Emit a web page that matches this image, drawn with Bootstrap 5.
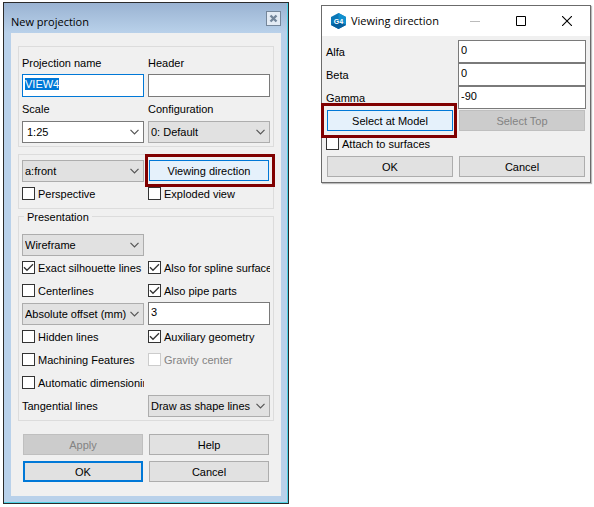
<!DOCTYPE html>
<html lang="en">
<head>
<meta charset="utf-8">
<meta name="viewport" content="width=device-width, initial-scale=1">
<title>New projection</title>
<link href="https://cdn.jsdelivr.net/npm/bootstrap@5.3.0/dist/css/bootstrap.min.css" rel="stylesheet">
<style>
body { font-family: "Liberation Sans", Arial, sans-serif; font-size: 11px; line-height: 15px; color: #000; background: #fff; }
.desktop { display: grid; grid-template-columns: 286fr 270fr; gap: 32px; padding: 2px 3px; align-items: start; }
.win-title { font-family: "Open Sans", "Noto Sans", sans-serif; font-size: 11px; line-height: 16px; font-weight: 400; color: #000; }
.win-old { border: 1px solid #2b2b2b; box-shadow: inset -1px -1px 0 #4fd3e6; background: linear-gradient(#9ab3d2, #b9d1ea 30px); padding: 0 7px 7px; }
.win-old header { height: 30px; }
.win-old .win-title { padding-top: 8px; }
.client { background: #f0f0f0; }
.client label { padding-top: 2px; }
.win-old .client { padding: 13px 7px 14px 7px; }
.win-new { border: 1px solid #6b6b6b; margin-top: 3px; box-shadow: 1px 1px 1px #bbb; }
.win-new header { height: 30px; background: #fff; padding-left: 9px; }
.win-new .win-title { padding-left: 5px; }
.win-new .client { padding: 4px 4px 5px; }
.close-old { width: 15px; height: 15px; border: 1px solid #74869a; background: #e3ebf4; }
.close-old, .cap-btn { padding: 0; line-height: 0; border-radius: 0; }
.cap-btn { width: 46px; border: 0; background: none; display: flex; justify-content: center; }
.group { border: 1px solid #dcdcdc; margin: 0 0 7px; padding: 4px 3px 3px; }
.pair { display: grid; grid-template-columns: 1fr 1fr; column-gap: 4px; grid-auto-rows: 23px; align-items: center; }
.pair > * { min-width: 0; }
.group-named { position: relative; padding-top: 16px; margin-bottom: 13px; }
.group-named legend { position: absolute; top: -7px; left: 5px; width: auto; padding: 0 3px; margin: 0; font-size: 11px; line-height: 15px; background: #f0f0f0; }
.form-control, .form-select { height: 23px; min-height: 0; font-size: 11px; line-height: 15px; border: 1px solid #7a7a7a; border-radius: 0; color: #000; padding: 1px 2px 5px; transition: none; }
.form-control:focus { border-color: #0078d7; box-shadow: none; color: #000; }
.form-control::selection { background: #0078d7; color: #fff; }
.form-select { height: 22px; padding: 1px 16px 0 2px; border-color: #adadad; background: #e1e1e1 url("data:image/svg+xml,%3Csvg xmlns='http://www.w3.org/2000/svg' width='9' height='6'%3E%3Cpath d='M.5 .8 4.5 4.8 8.5 .8' fill='none' stroke='%23555' stroke-width='1.2'/%3E%3C/svg%3E") no-repeat right 4px center / 9px 6px; }
.form-select.editable { background-color: #fff; border-color: #7a7a7a; padding-left: 4px; }
.tick { display: flex; align-items: center; gap: 3px; white-space: nowrap; overflow: hidden; }
.tick .form-check-input { flex: none; width: 13px; height: 13px; margin: 0; border: 1px solid #333; border-radius: 0; background-color: #fff; box-shadow: none; }
.tick .form-check-input:checked { background: #fff url("data:image/svg+xml,%3Csvg xmlns='http://www.w3.org/2000/svg' width='11' height='11'%3E%3Cpath d='M1 5.2 4 8.3 10 2.3' fill='none' stroke='%23333' stroke-width='1.3'/%3E%3C/svg%3E") no-repeat center / 11px 11px; }
.tick .form-check-input:disabled { border-color: #ccc; opacity: 1; }
.tick .form-check-input:disabled ~ label { color: #838383; opacity: 1; }
.btn-flat { height: 21px; width: 100%; padding: 1px 0 0; font-size: 11px; line-height: 15px; color: #000; background: #e1e1e1; border: 1px solid #adadad; border-radius: 0; position: relative; }
.btn-flat:disabled { background: #ccc; border-color: #bfbfbf; color: #838383; opacity: 1; }
.btn-hot { background: #e5f1fb; border-color: #0078d7; }
.btn-default { border: 2px solid #0078d7; }
.btn-cell { padding: 0 1px; }
.flagged::after { content: ""; position: absolute; inset: -7px -7px -7px -5px; border: 3px solid #800000; z-index: 2; }
.flagged-wide::after { inset: -8px -5px -8px -7px; }
.btn-grid { display: grid; grid-template-columns: 1fr 1fr; gap: 6px; padding: 0 5px; }
.angles { display: grid; grid-template-columns: 132fr 128fr; align-items: center; grid-auto-rows: 23px; }
.win-new .btn-grid { padding: 1px 1px 0; }
.win-new .tick { height: 23px; margin-top: 1px; }
</style>
</head>
<body>
<main class="desktop">
  <section class="win-old" aria-label="New projection">
    <header class="d-flex align-items-center justify-content-between">
      <h1 class="win-title m-0">New projection</h1>
      <button type="button" class="close-old" aria-label="Close"><svg width="13" height="13" viewBox="0 0 13 13"><path d="M3.5 3.5 9.5 9.5M9.5 3.5 3.5 9.5" stroke="#74869a" stroke-width="2.4"/></svg></button>
    </header>
    <form class="client">
      <fieldset class="group">
        <div class="pair">
          <label for="pname">Projection name</label><label for="head">Header</label>
          <input id="pname" class="form-control" type="text" value="VIEW4"><input id="head" class="form-control" type="text">
          <label for="scale">Scale</label><label for="conf">Configuration</label>
          <select id="scale" class="form-select editable"><option>1:25</option></select>
          <select id="conf" class="form-select"><option>0: Default</option></select>
        </div>
      </fieldset>
      <fieldset class="group">
        <div class="pair">
          <select class="form-select" aria-label="View"><option>a:front</option></select>
          <div class="btn-cell"><button type="button" class="btn btn-flat btn-hot flagged d-block">Viewing direction</button></div>
          <div class="tick"><input class="form-check-input" type="checkbox" id="c1"><label for="c1">Perspective</label></div>
          <div class="tick"><input class="form-check-input" type="checkbox" id="c2"><label for="c2">Exploded view</label></div>
        </div>
      </fieldset>
      <fieldset class="group group-named">
        <legend>Presentation</legend>
        <div class="pair">
          <select class="form-select" aria-label="Presentation style"><option>Wireframe</option></select><span></span>
          <div class="tick"><input class="form-check-input" type="checkbox" id="c3" checked><label for="c3">Exact silhouette lines</label></div>
          <div class="tick"><input class="form-check-input" type="checkbox" id="c4" checked><label for="c4">Also for spline surfaces</label></div>
          <div class="tick"><input class="form-check-input" type="checkbox" id="c5"><label for="c5">Centerlines</label></div>
          <div class="tick"><input class="form-check-input" type="checkbox" id="c6" checked><label for="c6">Also pipe parts</label></div>
          <select class="form-select" aria-label="Offset type"><option>Absolute offset (mm)</option></select>
          <input class="form-control" type="text" value="3" aria-label="Offset">
          <div class="tick"><input class="form-check-input" type="checkbox" id="c7"><label for="c7">Hidden lines</label></div>
          <div class="tick"><input class="form-check-input" type="checkbox" id="c8" checked><label for="c8">Auxiliary geometry</label></div>
          <div class="tick"><input class="form-check-input" type="checkbox" id="c9"><label for="c9">Machining Features</label></div>
          <div class="tick"><input class="form-check-input" type="checkbox" id="c10" disabled><label for="c10">Gravity center</label></div>
          <div class="tick"><input class="form-check-input" type="checkbox" id="c11"><label for="c11">Automatic dimensioning</label></div><span></span>
          <label for="tang">Tangential lines</label>
          <select id="tang" class="form-select"><option>Draw as shape lines</option></select>
        </div>
      </fieldset>
      <div class="btn-grid">
        <button type="button" class="btn btn-flat" disabled>Apply</button>
        <button type="button" class="btn btn-flat">Help</button>
        <button type="button" class="btn btn-flat btn-default">OK</button>
        <button type="button" class="btn btn-flat">Cancel</button>
      </div>
    </form>
  </section>

  <section class="win-new" aria-label="Viewing direction">
    <header class="d-flex align-items-center">
      <svg width="15" height="16" viewBox="0 0 15 16" aria-hidden="true"><path d="M7.5 0 15 4V12L7.5 16 0 12V4Z" fill="#0b78b8"/><path d="M7.5 0 15 4V12L7.5 8Z" fill="#1190cf"/><path d="M0 12 7.5 8 15 12 7.5 16Z" fill="#075f9d"/><text x="7.5" y="10.5" text-anchor="middle" font-family="Liberation Sans, sans-serif" font-weight="700" font-size="7" fill="#fff">G4</text></svg>
      <h2 class="win-title m-0 flex-grow-1">Viewing direction</h2>
      <button type="button" class="cap-btn" aria-label="Minimize" disabled><svg width="10" height="10"><path d="M0 5.5H10" stroke="#bbb"/></svg></button>
      <button type="button" class="cap-btn" aria-label="Maximize"><svg width="10" height="10"><path d="M.5 .5H9.5V9.5H.5Z" fill="none" stroke="#000"/></svg></button>
      <button type="button" class="cap-btn" aria-label="Close"><svg width="10" height="10"><path d="M0 0 10 10M10 0 0 10" stroke="#000" stroke-width="1.1"/></svg></button>
    </header>
    <form class="client">
      <div class="angles">
        <label for="alfa">Alfa</label><input id="alfa" class="form-control" type="text" value="0">
        <label for="beta">Beta</label><input id="beta" class="form-control" type="text" value="0">
        <label for="gamma">Gamma</label><input id="gamma" class="form-control" type="text" value="-90">
      </div>
      <div class="btn-grid">
        <button type="button" class="btn btn-flat btn-hot flagged flagged-wide">Select at Model</button>
        <button type="button" class="btn btn-flat" disabled>Select Top</button>
      </div>
      <div class="tick"><input class="form-check-input" type="checkbox" id="c12"><label for="c12">Attach to surfaces</label></div>
      <div class="btn-grid">
        <button type="button" class="btn btn-flat">OK</button>
        <button type="button" class="btn btn-flat">Cancel</button>
      </div>
    </form>
  </section>
</main>
<script src="https://cdn.jsdelivr.net/npm/bootstrap@5.3.0/dist/js/bootstrap.bundle.min.js"></script>
<script>
const nameBox = document.getElementById('pname');
nameBox.focus();
nameBox.select();
</script>
</body>
</html>
